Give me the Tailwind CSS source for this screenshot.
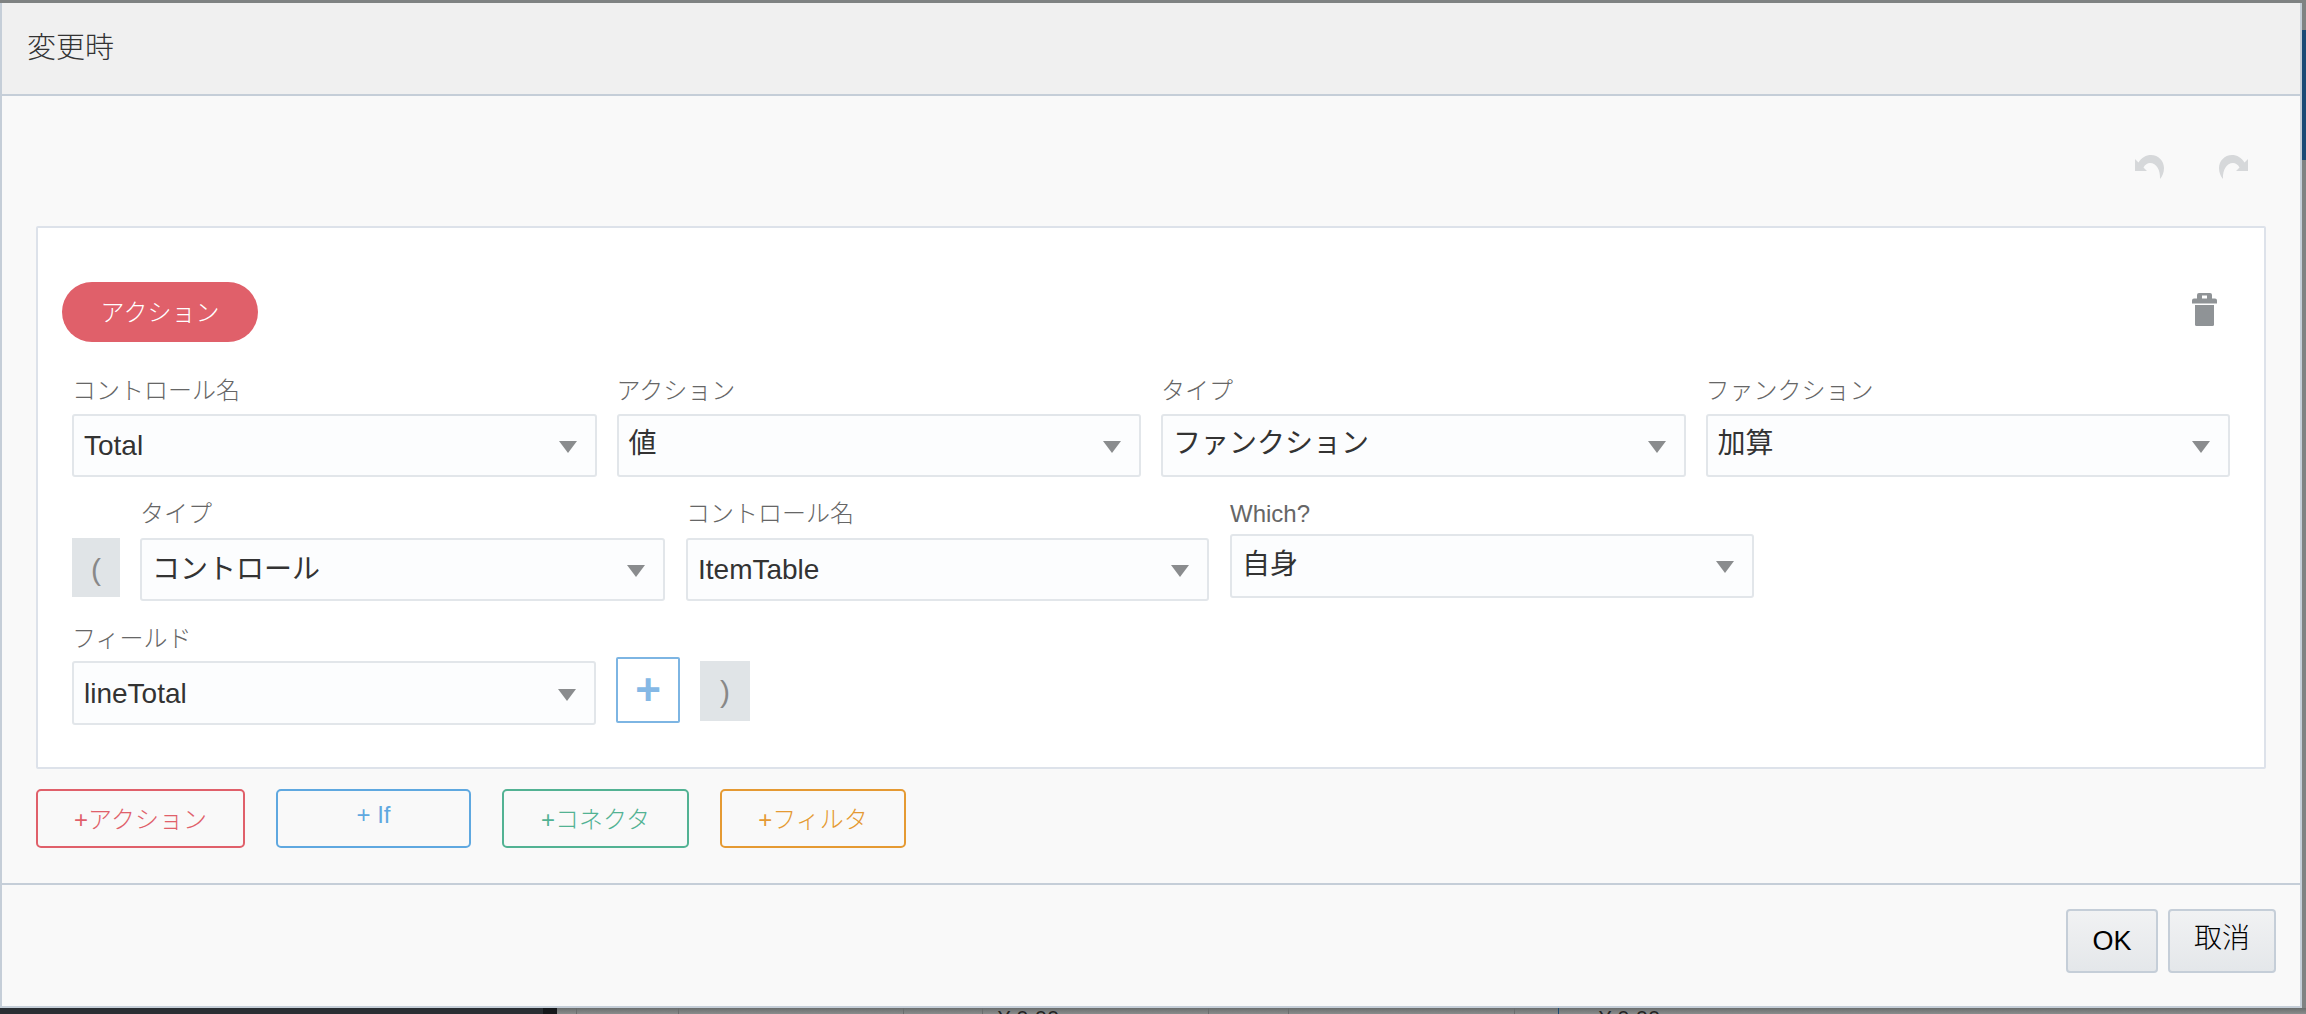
<!DOCTYPE html>
<html lang="ja">
<head>
    <meta charset="UTF-8">
    <title>変更時</title>
    <script src="https://cdn.jsdelivr.net/npm/@tailwindcss/browser@4"></script>
</head>
<body class="relative w-[2306px] h-[1014px] overflow-hidden bg-[#7f8282] font-['Liberation_Sans','Noto_Sans_CJK_JP',sans-serif] text-[#333]">
    <!-- page behind the dialog -->
    <div class="absolute right-0 top-[30px] w-1 h-[130px] bg-[#1c4a75]"></div>

    <div class="pt-[3px] w-[2302px]">
        <!-- dialog -->
        <div class="h-[1005px] flex flex-col border-x-2 border-b-2 border-[#c5ced8] bg-[#f9f9f9]">
            <div class="h-[93px] shrink-0 flex items-center pl-[25px] bg-[#f0f0f0] border-b-2 border-[#c5ced8] text-[29px] font-light">変更時</div>

            <div class="flex-1 px-[34px]">
                <!-- undo / redo -->
                <div class="h-[130px] flex justify-end pt-[59px] pr-[18px] gap-[55px]">
                    <svg class="w-[29px] h-[24px]" viewBox="0 0 29 24" fill="#d6d8da"><path d="M0 4 L3.5 7.5 C6.5 2.5 11 0 16 0 C23.5 0 29 6 29 13 C29 17.5 27.5 21 25 24 C25.5 15 21.5 8 15 8 C12.5 8 10 9.5 8.5 12.5 L12 16 L0 16 Z"/></svg>
                    <svg class="w-[29px] h-[24px] -scale-x-100" viewBox="0 0 29 24" fill="#d6d8da"><path d="M0 4 L3.5 7.5 C6.5 2.5 11 0 16 0 C23.5 0 29 6 29 13 C29 17.5 27.5 21 25 24 C25.5 15 21.5 8 15 8 C12.5 8 10 9.5 8.5 12.5 L12 16 L0 16 Z"/></svg>
                </div>

                <!-- action card -->
                <div class="w-[2230px] h-[543px] border-2 border-[#dde2ea] rounded-[2px] bg-white pt-[54px] pl-[24px]">
                    <div class="flex justify-between items-start w-[2155px]">
                        <div class="w-[196px] h-[60px] pt-[2px] rounded-[30px] bg-[#e0606a] text-white text-[24px] font-light flex items-center justify-center">アクション</div>
                        <svg class="w-[25px] h-[33px] mt-[11px]" viewBox="0 0 25 33" fill="#8f9396">
                            <path fill-rule="evenodd" d="M7 0 H18 Q20 0 20 2 V5.5 H23 Q25 5.5 25 7.5 V10.5 H0 V7.5 Q0 5.5 2 5.5 H5 V2 Q5 0 7 0 Z M10 2.5 V5.5 H15 V2.5 Z"/>
                            <path d="M3 12 H22 V31.5 Q22 33 20.5 33 H4.5 Q3 33 3 31.5 Z"/>
                        </svg>
                    </div>

                    <div class="pl-[10px]">
                        <div class="mt-[30px] grid grid-cols-[repeat(4,524.5px)] gap-x-5">
                            <div>
                                <div class="h-[36px] mb-[6px] text-[24px] leading-[37px] font-light text-[#666]">コントロール名</div>
                                <div class="h-[63px] flex items-center justify-between pl-[10px] pr-[18px] pt-[1px] border-2 border-[#e2e6ea] rounded-[3px] bg-[#fcfdfe] text-[28px]"><span>Total</span><svg class="w-[18px] h-[12px] mt-[2px]" viewBox="0 0 18 12" fill="#8a8c8e"><path d="M0 0 H18 L9 12 Z"/></svg></div>
                            </div>
                            <div>
                                <div class="h-[36px] mb-[6px] text-[24px] leading-[37px] font-light text-[#666]">アクション</div>
                                <div class="h-[63px] flex items-center justify-between pl-[10px] pr-[18px] border-2 border-[#e2e6ea] rounded-[3px] bg-[#fcfdfe] text-[28px]"><span class="-mt-[3px]">値</span><svg class="w-[18px] h-[12px] mt-[2px]" viewBox="0 0 18 12" fill="#8a8c8e"><path d="M0 0 H18 L9 12 Z"/></svg></div>
                            </div>
                            <div>
                                <div class="h-[36px] mb-[6px] text-[24px] leading-[37px] font-light text-[#666]">タイプ</div>
                                <div class="h-[63px] flex items-center justify-between pl-[10px] pr-[18px] border-2 border-[#e2e6ea] rounded-[3px] bg-[#fcfdfe] text-[28px]"><span class="-mt-[3px]">ファンクション</span><svg class="w-[18px] h-[12px] mt-[2px]" viewBox="0 0 18 12" fill="#8a8c8e"><path d="M0 0 H18 L9 12 Z"/></svg></div>
                            </div>
                            <div>
                                <div class="h-[36px] mb-[6px] text-[24px] leading-[37px] font-light text-[#666]">ファンクション</div>
                                <div class="h-[63px] flex items-center justify-between pl-[10px] pr-[18px] border-2 border-[#e2e6ea] rounded-[3px] bg-[#fcfdfe] text-[28px]"><span class="-mt-[3px]">加算</span><svg class="w-[18px] h-[12px] mt-[2px]" viewBox="0 0 18 12" fill="#8a8c8e"><path d="M0 0 H18 L9 12 Z"/></svg></div>
                            </div>
                        </div>

                        <div class="mt-[19px] flex items-start">
                            <div class="w-[48px] h-[59px] mt-[42px] mr-5 pt-[4px] bg-[#e0e4e7] text-[#888] text-[30px] font-light flex items-center justify-center">(</div>
                            <div class="w-[525px] mr-[21px]">
                                <div class="h-[36px] mb-[6px] text-[24px] leading-[36px] font-light text-[#666]">タイプ</div>
                                <div class="h-[63px] flex items-center justify-between pl-[10px] pr-[18px] pt-[1px] border-2 border-[#e2e6ea] rounded-[3px] bg-[#fcfdfe] text-[28px]"><span>コントロール</span><svg class="w-[18px] h-[12px] mt-[2px]" viewBox="0 0 18 12" fill="#8a8c8e"><path d="M0 0 H18 L9 12 Z"/></svg></div>
                            </div>
                            <div class="w-[523px] mr-[21px]">
                                <div class="h-[36px] mb-[6px] text-[24px] leading-[36px] font-light text-[#666]">コントロール名</div>
                                <div class="h-[63px] flex items-center justify-between pl-[10px] pr-[18px] pt-[1px] border-2 border-[#e2e6ea] rounded-[3px] bg-[#fcfdfe] text-[28px]"><span>ItemTable</span><svg class="w-[18px] h-[12px] mt-[2px]" viewBox="0 0 18 12" fill="#8a8c8e"><path d="M0 0 H18 L9 12 Z"/></svg></div>
                            </div>
                            <div class="w-[524px]">
                                <div class="h-[36px] mb-[2px] text-[24px] leading-[36px] font-light text-[#666]">Which?</div>
                                <div class="h-[64px] flex items-center justify-between pl-[10px] pr-[18px] border-2 border-[#e2e6ea] rounded-[3px] bg-[#fcfdfe] text-[28px]"><span class="-mt-[3px]">自身</span><svg class="w-[18px] h-[12px] mt-[2px]" viewBox="0 0 18 12" fill="#8a8c8e"><path d="M0 0 H18 L9 12 Z"/></svg></div>
                            </div>
                        </div>

                        <div class="mt-[19px] flex items-start">
                            <div class="w-[524px] mr-5">
                                <div class="h-[36px] mb-[5px] text-[24px] leading-[38px] font-light text-[#666]">フィールド</div>
                                <div class="h-[64px] flex items-center justify-between pl-[10px] pr-[18px] pt-[1px] border-2 border-[#e2e6ea] rounded-[3px] bg-[#fcfdfe] text-[28px]"><span>lineTotal</span><svg class="w-[18px] h-[12px] mt-[2px]" viewBox="0 0 18 12" fill="#8a8c8e"><path d="M0 0 H18 L9 12 Z"/></svg></div>
                            </div>
                            <div class="w-[64px] h-[66px] mt-[37px] mr-5 border-2 border-[#7db5e3] rounded-[2px] bg-white text-[#85b8e5] text-[44px] font-bold leading-none flex items-center justify-center">+</div>
                            <div class="w-[50px] h-[60px] mt-[41px] bg-[#e0e4e7] text-[#888] text-[30px] font-light flex items-center justify-center">)</div>
                        </div>
                    </div>
                </div>

                <!-- add buttons -->
                <div class="mt-[20px] flex text-[24px] font-light">
                    <div class="w-[209px] h-[59px] mr-[31px] pt-[2px] border-2 border-[#e0606a] rounded-[5px] text-[#e0606a] flex items-center justify-center">+アクション</div>
                    <div class="w-[195px] h-[59px] mr-[31px] border-2 border-[#5fa8e0] rounded-[5px] text-[#5fa8e0] flex items-center justify-center pb-[8px]">+ If</div>
                    <div class="w-[187px] h-[59px] mr-[31px] pt-[2px] border-2 border-[#52b293] rounded-[5px] text-[#52b293] flex items-center justify-center">+コネクタ</div>
                    <div class="w-[186px] h-[59px] pt-[2px] border-2 border-[#e59a33] rounded-[5px] text-[#e59a33] flex items-center justify-center">+フィルタ</div>
                </div>
            </div>

            <!-- footer -->
            <div class="h-[123px] shrink-0 border-t-2 border-[#c5ced8] flex justify-end items-start pt-[24px] pr-[24px] gap-[10px] text-black">
                <div class="w-[92px] h-[64px] border-2 border-[#c5ced8] rounded-[4px] bg-linear-to-b from-[#f1f2f3] to-[#e4e7ea] text-[27px] flex items-center justify-center">OK</div>
                <div class="w-[108px] h-[64px] pb-[4px] border-2 border-[#c5ced8] rounded-[4px] bg-linear-to-b from-[#f1f2f3] to-[#e4e7ea] text-[28px] font-light flex items-center justify-center">取消</div>
            </div>
        </div>
    </div>

    <!-- table showing under the dialog -->
    <div class="flex h-[6px] overflow-hidden bg-linear-to-b from-[#6a6d6d] to-[#8a8d8d] text-[22px] leading-[21px] text-[#222]">
        <div class="w-[543px] bg-[#2a2e33]"></div>
        <div class="w-[14px] bg-[#15171a]"></div>
        <div class="w-[20px] border-r border-[#6a6d6d]"></div>
        <div class="w-[102px] border-r border-[#6a6d6d]"></div>
        <div class="w-[225px] border-r border-[#6a6d6d]"></div>
        <div class="w-[79px] border-r border-[#6a6d6d]"></div>
        <div class="w-[226px] border-r border-[#6a6d6d] pl-[15px]">¥ 0.00</div>
        <div class="w-[80px] border-r border-[#6a6d6d]"></div>
        <div class="w-[226px] border-r border-[#6a6d6d]"></div>
        <div class="w-[44px] border-r border-[#1c4a75]"></div>
        <div class="pl-[40px]">¥ 0.00</div>
    </div>
</body>
</html>
